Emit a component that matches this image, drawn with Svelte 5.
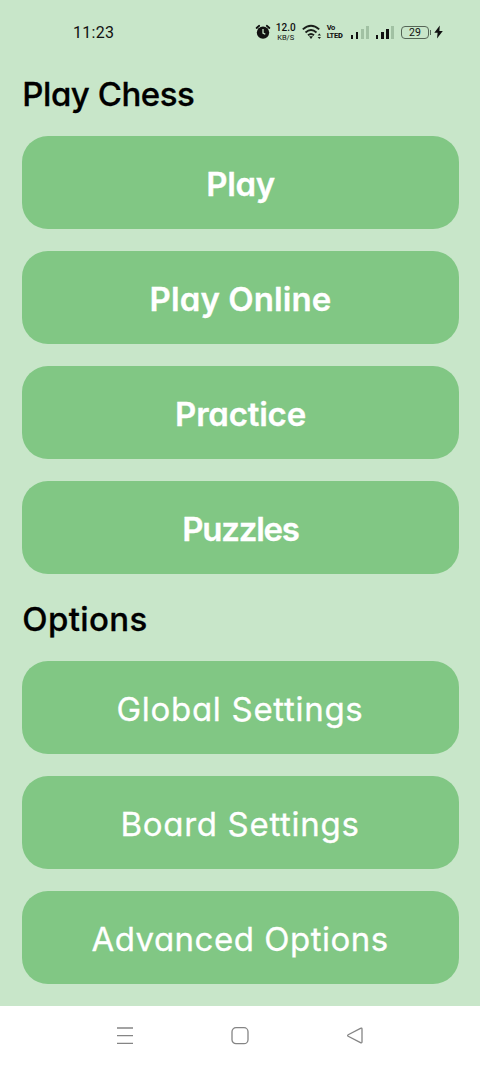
<script lang="ts">
  type Item = { label: string; spacing: number };
  type Section = { title: string; titleSpacing: number; strong: boolean; items: Item[] };

  const sections: Section[] = [
    {
      title: "Play Chess",
      titleSpacing: -0.45,
      strong: true,
      items: [
        { label: "Play", spacing: -0.4 },
        { label: "Play Online", spacing: 0.1 },
        { label: "Practice", spacing: -0.2 },
        { label: "Puzzles", spacing: -1.25 },
      ],
    },
    {
      title: "Options",
      titleSpacing: 0.35,
      strong: false,
      items: [
        { label: "Global Settings", spacing: 0.7 },
        { label: "Board Settings", spacing: 0.7 },
        { label: "Advanced Options", spacing: 0.5 },
      ],
    },
  ];

  // active bars out of four
  const signals = [2, 3];
  const barHeights = [4, 7, 10, 13];
</script>

<div class="screen">
  <header class="status">
    <span class="clock">11:23</span>
    <div class="indicators">
      <svg class="alarm" width="16" height="16" viewBox="0 0 16 16">
        <circle cx="8" cy="8.6" r="6.2" fill="#111" />
        <path d="M1.6 4 4.2 1.8M14.4 4 11.8 1.8" stroke="#111" stroke-width="1.8" stroke-linecap="round" />
        <path d="M8 5v4l2.3 1.3" fill="none" stroke="#c8e6c9" stroke-width="1.3" />
      </svg>
      <div class="speed"><span class="rate">12.0</span><span class="unit">KB/S</span></div>
      <svg class="wifi" width="20" height="16" viewBox="0 0 20 16" fill="none" stroke="#1a1f1a" stroke-width="1.9">
        <path d="M.8 5.4Q9 -2 17.2 5.4M3.5 8.5Q9 3.6 14.5 8.5M6 11.3Q9 8.8 12 11.3" />
        <path d="M7 12.2h4L9 15z" fill="#1a1f1a" stroke="none" />
        <path d="M15.6 11.4l1.7-2 1.7 2zM15.6 13l1.7 2 1.7-2z" fill="#1a1f1a" stroke="none" />
      </svg>
      <div class="volte"><span>Vo</span><span>LTE<b>D</b></span></div>
      {#each signals as active}
        <div class="signal">
          {#each barHeights as h, i}
            <i class:on={i < active} style="height: {h}px"></i>
          {/each}
        </div>
      {/each}
      <div class="battery">29</div>
      <svg class="bolt" width="9" height="14" viewBox="0 0 9 14"><path d="M5.8.5.3 7.8h3.3L3 13.5 8.8 6H5.4z" fill="#111" /></svg>
    </div>
  </header>

  <main>
    {#each sections as section}
      <section>
        <h2 style="letter-spacing: {section.titleSpacing}px">{section.title}</h2>
        <div class="list">
          {#each section.items as item}
            <button class:strong={section.strong} style="letter-spacing: {item.spacing}px">{item.label}</button>
          {/each}
        </div>
      </section>
    {/each}
  </main>

  <nav>
    <svg width="18" height="20" viewBox="0 0 18 20"><path d="M1 2h16M1 9.7h16M1 17.3h16" /></svg>
    <svg width="18" height="20" viewBox="0 0 18 20"><rect x="1" y="1.7" width="16" height="16" rx="4" /></svg>
    <svg width="18" height="20" viewBox="0 0 18 20"><path d="M14.5 2.3Q16 1.6 16 3.2V15.8Q16 17.4 14.5 16.6L2.2 10.3Q1 9.5 2.2 8.7z" /></svg>
  </nav>
</div>

<style>
  :global(body) { margin: 0; background: #fff; }
  .screen {
    width: 480px;
    height: 1065px;
    display: flex;
    flex-direction: column;
    background: #c8e6c9;
    font-family: Inter, "Liberation Sans", sans-serif;
    font-feature-settings: "cv11" 1;
    overflow: hidden;
  }
  .status {
    display: flex;
    justify-content: space-between;
    align-items: center;
    height: 64px;
    padding: 0 37px 0 73px;
    box-sizing: border-box;
    color: #111;
  }
  .clock { font-family: Roboto, sans-serif; font-size: 16px; letter-spacing: 0.3px; }
  .indicators { display: flex; align-items: center; }
  .speed, .volte { display: flex; flex-direction: column; align-items: center; font-family: Roboto, sans-serif; }
  .speed { width: 20px; margin-left: 5px; }
  .rate { font-size: 10px; line-height: 10px; font-weight: 500; }
  .unit { font-size: 7.5px; line-height: 9px; }
  .wifi { margin-left: 6px; }
  .volte {
    width: 17px;
    margin: 0 7px 0 5px;
    align-items: flex-start;
    font-size: 7.5px;
    line-height: 8.5px;
    font-weight: 700;
    letter-spacing: -0.3px;
  }
  .volte b { font-weight: 900; }
  .signal { display: flex; align-items: flex-end; gap: 2.6px; height: 13px; margin-right: 7px; }
  .signal i { width: 2.6px; background: #a1c1a3; }
  .signal i.on { background: #111; }
  .battery {
    position: relative;
    width: 28px;
    height: 13px;
    box-sizing: border-box;
    border: 1px solid #566657;
    border-radius: 4px;
    font: 10.5px/11px Roboto, sans-serif;
    text-align: center;
  }
  .battery::after {
    content: "";
    position: absolute;
    right: -3px;
    top: 3px;
    width: 1.5px;
    height: 5px;
    background: #566657;
  }
  .bolt { margin-left: 5px; }

  main { flex: none; height: 942px; padding: 0 21.5px; }
  h2 {
    margin: 0;
    height: 72px;
    padding-left: 0.8px;
    font-size: 33px;
    line-height: 60px;
    font-weight: 500;
    color: #000;
    white-space: nowrap;
    -webkit-text-stroke: 0.3px;
  }
  section + section h2 { height: 65.4px; margin-top: 22px; line-height: 46px; }
  .list { display: flex; flex-direction: column; gap: 22px; }
  button {
    height: 93px;
    padding: 2px 0 0;
    border: 0;
    border-radius: 26px;
    background: #81c784;
    color: #fff;
    font-family: inherit;
    font-feature-settings: inherit;
    font-size: 33px;
    font-weight: 400;
    white-space: nowrap;
    -webkit-text-stroke: 0.3px;
  }
  button.strong { padding-left: 1px; font-weight: 600; }

  nav {
    flex: 1;
    display: flex;
    justify-content: center;
    align-items: center;
    gap: 97px;
    background: #fff;
  }
  nav svg { fill: none; stroke: #858585; stroke-width: 1.3; }
</style>
